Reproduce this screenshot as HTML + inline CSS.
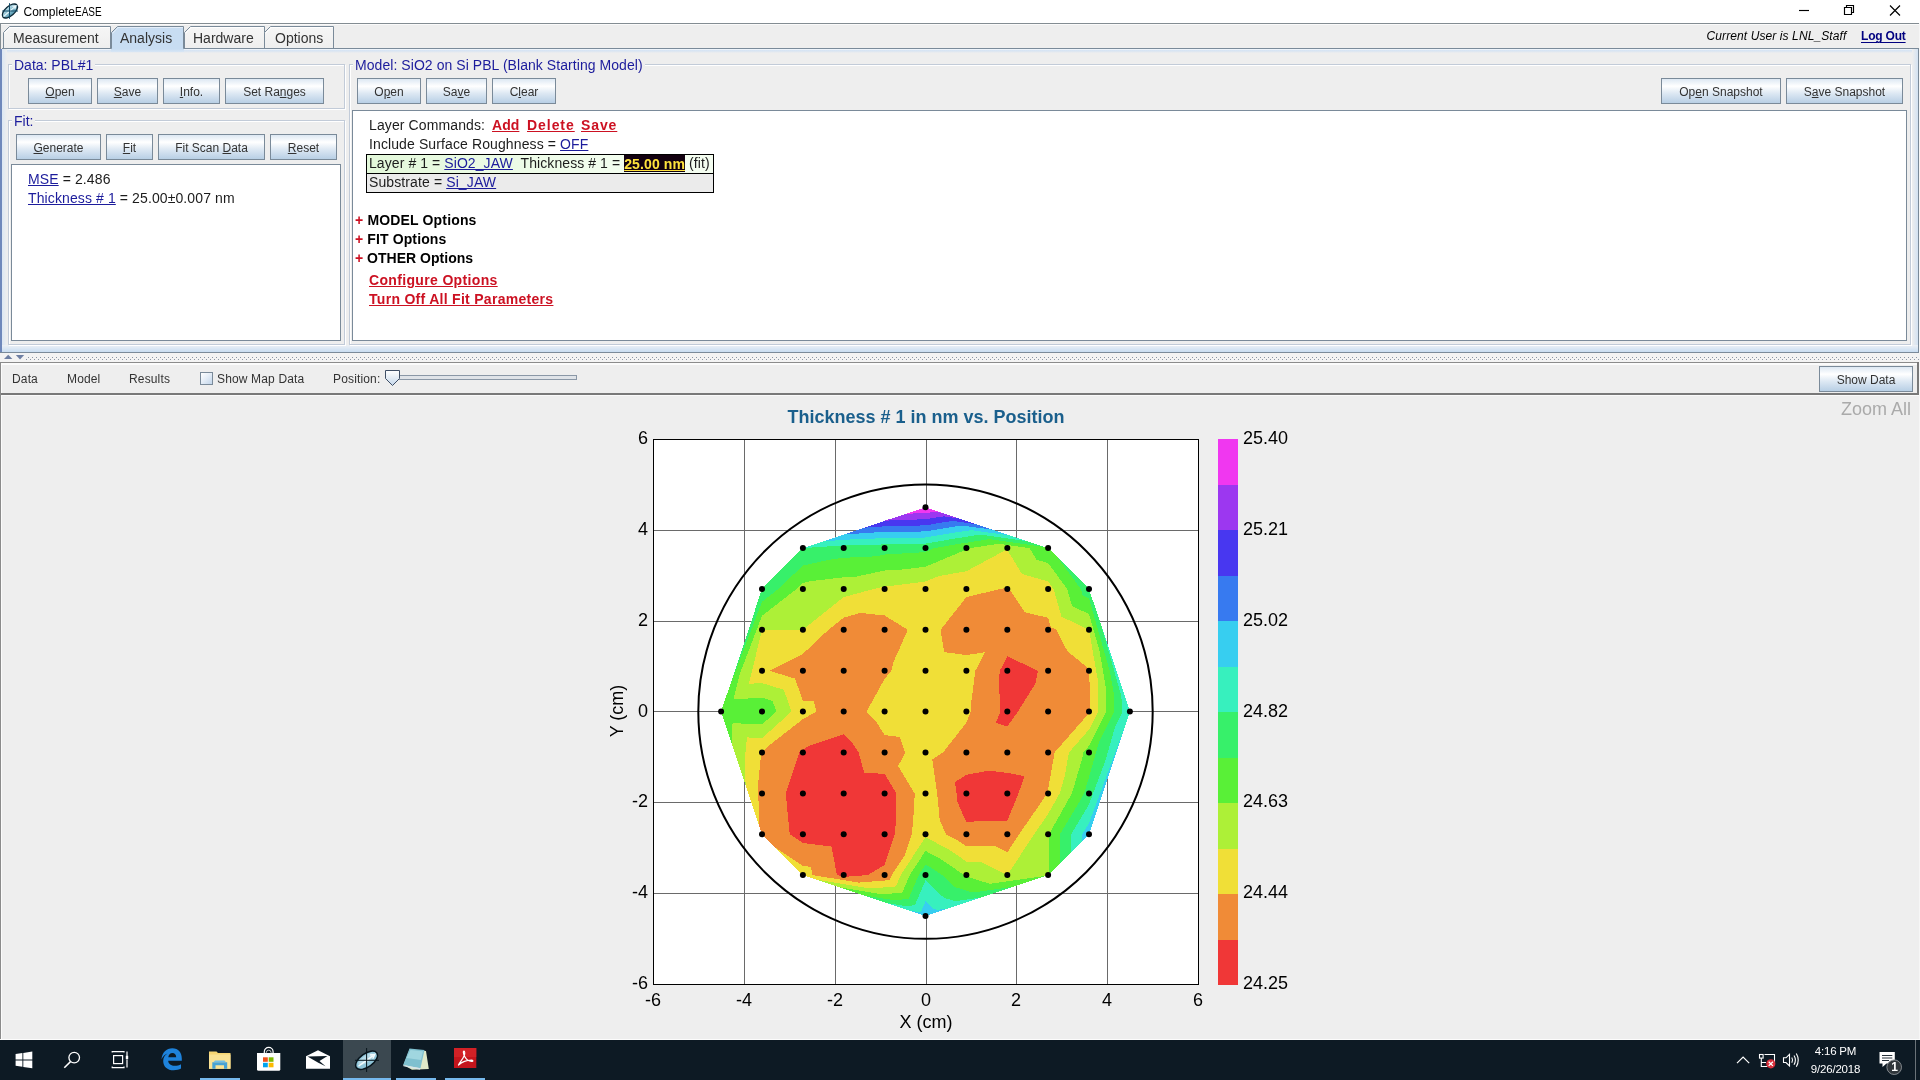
<!DOCTYPE html>
<html lang="en"><head><meta charset="utf-8"><title>CompleteEASE</title>
<style>
html,body{margin:0;padding:0}
body{width:1920px;height:1080px;overflow:hidden;position:relative;background:#eeeeee;font-family:"Liberation Sans",sans-serif;color:#333;font-size:12px}
div,span{box-sizing:border-box}
.a{position:absolute}
.btn{position:absolute;border:1px solid #7a8a99;background:linear-gradient(#dde8f3 0%,#ffffff 30%,#dde8f3 60%,#b8cfe5 100%);font-size:12px;color:#333;text-align:center;line-height:24px;padding-top:1px;white-space:nowrap}
u{text-decoration:underline;text-underline-offset:1px}
.grp{position:absolute;border:1px solid #c2cbd8;box-shadow:1px 1px 0 #fff, inset 1px 1px 0 #fff}
.gt{position:absolute;font-size:14px;color:#1c1c9c;background:#eeeeee;padding:0 2px;line-height:16px;white-space:nowrap}
.wp{position:absolute;background:#fff;border:1px solid #7a8a99}
.t14{position:absolute;font-size:14px;line-height:19px;color:#1c1c1c;white-space:nowrap;letter-spacing:0.11px}
.lnk{color:#1c1c9c;text-decoration:underline}
.red{color:#cc1122;font-weight:bold;text-decoration:underline}
.bk{font-weight:bold;color:#000}
.t12{position:absolute;font-size:12px;line-height:14px;color:#333;white-space:nowrap;letter-spacing:0.15px}

#root{position:absolute;left:0;top:0;width:1920px;height:1080px;will-change:transform}

</style></head>
<body>
<div id="root">
<!-- title bar -->
<div class="a" style="left:0;top:0;width:1920px;height:23px;background:#fff"></div>
<svg class="a" style="left:0;top:1px" width="21" height="21" viewBox="0 0 21 21">
 <defs><linearGradient id="ig" x1="0" y1="0" x2="0" y2="1"><stop offset="0" stop-color="#b9dce8"/><stop offset="0.55" stop-color="#86bccf"/><stop offset="1" stop-color="#4f93ab"/></linearGradient></defs>
 <g transform="rotate(-41 9.9 10.0)"><ellipse cx="9.9" cy="10.0" rx="9.2" ry="4.700" fill="url(#ig)" stroke="#0c2836" stroke-width="1.3"/>
 <path d="M1.500 10.0H17M14.800 8.200L18 10.0L14.800 11.800" stroke="#e9f7fb" stroke-width="1.1" fill="none"/></g>
 <path d="M2.200 10.0H18M9.500 2.200V17.800" stroke="#124a66" stroke-width="1" fill="none"/>
</svg>
<div class="a" style="left:23.5px;top:5px;font-size:12px;line-height:14px;color:#000;white-space:nowrap">Complete<span style="display:inline-block;transform:scaleX(0.83);transform-origin:0 50%">EASE</span></div>
<svg class="a" style="left:1790px;top:0" width="130" height="23" viewBox="0 0 130 23" fill="none" stroke="#000" stroke-width="1.15">
 <path d="M9 10.5H19"/>
 <path d="M54.5 7.5h7v7h-7z M56.5 7.5v-2h7v7h-2"/>
 <path d="M100 5.5l10 10M110 5.5l-10 10"/>
</svg>
<!-- window frame lines -->
<div class="a" style="left:0;top:23px;width:1919px;height:1px;background:#838c92"></div>
<div class="a" style="left:0;top:23px;width:1px;height:26px;background:#838c92"></div>
<div class="a" style="left:1px;top:24px;width:1918px;height:1px;background:#fafafa"></div>
<div class="a" style="left:1919px;top:23px;width:1px;height:1017px;background:#f6f6f6"></div>
<!-- tabs -->
<svg class="a" style="left:0;top:24px" width="400" height="30" viewBox="0 0 400 30">
 <defs><linearGradient id="tg" x1="0" y1="0" x2="0" y2="1"><stop offset="0" stop-color="#f6f6f6"/><stop offset="1" stop-color="#eeeeee"/></linearGradient></defs>
 <path d="M3.5 24.5V8.5L9.5 2.5H110.5V24.5" fill="url(#tg)" stroke="#7a8a99"/>
 <path d="M184.500 24.5V8.5L190.5 2.5H264.5V24.5" fill="url(#tg)" stroke="#7a8a99"/>
 <path d="M264.500 24.5V8.5L270.5 2.5H333.500V24.5" fill="url(#tg)" stroke="#7a8a99"/>
 <path d="M4.5 9.5L10 3.5H110M185.500 9.500L191 3.5H264M265.500 9.5L271 3.5H333" fill="none" stroke="#fff" stroke-opacity="0.9"/>
</svg>
<div class="a" style="left:2px;top:48px;width:1917px;height:1px;background:#7a8a99"></div>
<svg class="a" style="left:108px;top:24px" width="80" height="30" viewBox="0 0 80 30">
 <path d="M3.500 28V8.5L9.5 2.5H75.500V28Z" fill="#c8ddf2"/>
 <path d="M3.500 24.5V8.5L9.5 2.5H75.500V24.5" fill="none" stroke="#7a8a99"/>
 <path d="M4.500 9.5L10 3.500H75" fill="none" stroke="#e4eef9"/>
</svg>
<div class="a" style="left:13px;top:30px;font-size:14px;line-height:16px;color:#333;white-space:nowrap">Measurement</div>
<div class="a" style="left:120px;top:30px;font-size:14px;line-height:16px;color:#333;white-space:nowrap">Analysis</div>
<div class="a" style="left:193px;top:30px;font-size:14px;line-height:16px;color:#333;white-space:nowrap">Hardware</div>
<div class="a" style="left:275px;top:30px;font-size:14px;line-height:16px;color:#333;white-space:nowrap">Options</div>
<div class="a" style="left:1706.5px;top:29px;font-size:12px;line-height:14px;color:#000;font-style:italic;white-space:nowrap;letter-spacing:0.1px">Current User is LNL_Staff</div>
<div class="a" style="left:1861px;top:29px;font-size:12px;line-height:14px;color:#000080;font-weight:bold;text-decoration:underline;text-underline-offset:2px;text-decoration-thickness:1.3px;white-space:nowrap;letter-spacing:-0.2px">Log Out</div>
<!-- tab content panel -->
<div class="a" style="left:2px;top:49px;width:1916px;height:4px;background:linear-gradient(#f8fbfe,#d5e3f3 40%,#eeeeee)"></div>
<div class="a" style="left:111px;top:49px;width:73px;height:3px;background:linear-gradient(#c8ddf2,#d8e6f5)"></div>
<div class="a" style="left:0;top:49px;width:2px;height:304px;background:#6f88bb"></div>
<div class="a" style="left:2px;top:49px;width:5px;height:303px;background:linear-gradient(90deg,#dbe7f4,#eeeeee)"></div>
<div class="a" style="left:1912px;top:49px;width:6px;height:303px;background:linear-gradient(90deg,#eeeeee,#d3e2f2)"></div>
<div class="a" style="left:1918px;top:48px;width:1px;height:305px;background:#7a8a99"></div>
<div class="a" style="left:2px;top:345px;width:1916px;height:7px;background:linear-gradient(#eef1f5,#c8ddf2)"></div>
<div class="a" style="left:0;top:352px;width:1919px;height:1px;background:#7a8a99"></div>
<!-- group: Data -->
<div class="grp" style="left:8px;top:64px;width:337px;height:45px"></div>
<div class="gt" style="left:12px;top:57px">Data: PBL#1</div>
<div class="btn" style="left:28px;top:78px;width:64px;height:26px"><u>O</u>pen</div>
<div class="btn" style="left:97px;top:78px;width:61px;height:26px"><u>S</u>ave</div>
<div class="btn" style="left:163px;top:78px;width:57px;height:26px"><u>I</u>nfo.</div>
<div class="btn" style="left:225px;top:78px;width:99px;height:26px">Set Ra<u>n</u>ges</div>
<!-- group: Fit -->
<div class="grp" style="left:8px;top:120px;width:337px;height:225px"></div>
<div class="gt" style="left:12px;top:113px">Fit:</div>
<div class="btn" style="left:16px;top:134px;width:85px;height:26px"><u>G</u>enerate</div>
<div class="btn" style="left:106px;top:134px;width:47px;height:26px"><u>F</u>it</div>
<div class="btn" style="left:158px;top:134px;width:107px;height:26px">Fit Scan <u>D</u>ata</div>
<div class="btn" style="left:270px;top:134px;width:67px;height:26px"><u>R</u>eset</div>
<div class="wp" style="left:11px;top:164px;width:330px;height:177px"></div>
<div class="t14" style="left:28px;top:170px"><span class="lnk">MSE</span> = 2.486</div>
<div class="t14" style="left:28px;top:189px"><span class="lnk">Thickness # 1</span> = 25.00±0.007 nm</div>
<!-- group: Model -->
<div class="grp" style="left:349px;top:64px;width:1562px;height:281px"></div>
<div class="gt" style="left:353px;top:57px;letter-spacing:0.06px">Model: SiO2 on Si PBL (Blank Starting Model)</div>
<div class="btn" style="left:357px;top:78px;width:64px;height:26px">O<u>p</u>en</div>
<div class="btn" style="left:426px;top:78px;width:61px;height:26px">Sa<u>v</u>e</div>
<div class="btn" style="left:492px;top:78px;width:64px;height:26px">C<u>l</u>ear</div>
<div class="btn" style="left:1661px;top:78px;width:120px;height:26px">Op<u>e</u>n Snapshot</div>
<div class="btn" style="left:1786px;top:78px;width:117px;height:26px">S<u>a</u>ve Snapshot</div>
<div class="wp" style="left:352px;top:110px;width:1555px;height:231px"></div>
<div class="t14" style="left:369px;top:116px">Layer Commands:</div>
<div class="t14 red" style="left:492px;top:116px;letter-spacing:0.05px">Add</div>
<div class="t14 red" style="left:527px;top:116px;letter-spacing:0.95px">Delete</div>
<div class="t14 red" style="left:581px;top:116px;letter-spacing:0.9px">Save</div>
<div class="t14" style="left:369px;top:135px">Include Surface Roughness = <span class="lnk">OFF</span></div>
<div class="a" style="left:366px;top:154px;width:348px;height:39px;border:1px solid #000;background:#ebebeb"></div>
<div class="a" style="left:367px;top:155px;width:346px;height:18px;background:linear-gradient(90deg,#e3f8da,#f2fdee 70%,#f4fdf0)"></div>
<div class="a" style="left:367px;top:173px;width:346px;height:1px;background:#000"></div>
<div class="t14" style="left:369px;top:154px;letter-spacing:0.08px">Layer # 1 = <span class="lnk">SiO2_JAW</span>&nbsp; Thickness # 1 = <span style="background:#12000f;color:#ffe23c;font-weight:bold;text-decoration:underline;display:inline-block;height:17px;line-height:19px;margin-top:1px;vertical-align:top;padding:0;letter-spacing:0.12px">25.00 nm</span> (fit)</div>
<div class="t14" style="left:369px;top:173px">Substrate = <span class="lnk">Si_JAW</span></div>
<div class="t14 bk" style="left:355px;top:211px;letter-spacing:0.16px"><span style="color:#cc1122">+</span> MODEL Options</div>
<div class="t14 bk" style="left:355px;top:230px;letter-spacing:0.12px"><span style="color:#cc1122">+</span> FIT Options</div>
<div class="t14 bk" style="left:355px;top:249px;letter-spacing:0.02px"><span style="color:#cc1122">+</span> OTHER Options</div>
<div class="t14 red" style="left:369px;top:271px;letter-spacing:0.34px">Configure Options</div>
<div class="t14 red" style="left:369px;top:290px;letter-spacing:0.29px">Turn Off All Fit Parameters</div>
<!-- splitter -->
<div class="a" style="left:0;top:353px;width:1920px;height:9px;background:#f3f3f3"></div>
<svg class="a" style="left:0;top:353px" width="1920" height="9" viewBox="0 0 1920 9">
 <defs><pattern id="dots" x="0" y="0" width="4" height="4" patternUnits="userSpaceOnUse"><rect x="0" y="0" width="1" height="1" fill="#8c96a4"/><rect x="2" y="2" width="1" height="1" fill="#8c96a4"/></pattern></defs>
 <rect x="14" y="4" width="1906" height="3" fill="url(#dots)"/>
 <rect x="0" y="1" width="26" height="7" fill="#f3f3f3"/>
 <path d="M4 6L8.200 1.800L12.400 6Z" fill="#6e7fa3"/>
 <path d="M15.800 2H24.200L20 6.400Z" fill="#6e7fa3"/>
</svg>
<!-- lower toolbar -->
<div class="a" style="left:0;top:362px;width:1919px;height:1px;background:#8b8b8b"></div>
<div class="a" style="left:0;top:362px;width:1px;height:677px;background:#8b8b8b"></div>
<div class="a" style="left:1px;top:363px;width:1px;height:676px;background:#fbfbfb"></div>
<div class="a" style="left:1px;top:363px;width:1916px;height:2px;background:#fbfbfb"></div>
<div class="a" style="left:1917px;top:362px;width:2px;height:33px;background:#787878"></div>
<div class="a" style="left:1px;top:393px;width:1918px;height:2px;background:#787878"></div>
<div class="a" style="left:1px;top:395px;width:1918px;height:1px;background:#fafafa"></div>
<div class="t12" style="left:12px;top:372px">Data</div>
<div class="t12" style="left:67px;top:372px">Model</div>
<div class="t12" style="left:129px;top:372px">Results</div>
<div class="a" style="left:200px;top:372px;width:13px;height:13px;border:1px solid #7a8a99;background:linear-gradient(135deg,#ffffff 0%,#e6eef7 45%,#c2d5ea 100%)"></div>
<div class="t12" style="left:217px;top:372px">Show Map Data</div>
<div class="t12" style="left:333px;top:372px">Position:</div>
<svg class="a" style="left:384px;top:368px" width="196" height="19" viewBox="0 0 196 19">
 <defs><linearGradient id="sg" x1="0" y1="0" x2="0" y2="1"><stop offset="0" stop-color="#ffffff"/><stop offset="1" stop-color="#c5d7ea"/></linearGradient></defs>
 <rect x="9.5" y="7.500" width="183" height="4" fill="#dfe3e8" stroke="#8a97a6"/>
 <path d="M1.500 2.500H15.500V10.500L8.500 17.500L1.500 10.500Z" fill="url(#sg)" stroke="#3f4f66" stroke-linejoin="round"/>
</svg>
<div class="btn" style="left:1819px;top:366px;width:94px;height:26px">Show Data</div>
<div class="a" style="left:1841px;top:399px;font-size:18px;line-height:20px;color:#aaaaaa;white-space:nowrap">Zoom All</div>
<div class="a" style="left:0;top:1039px;width:1920px;height:1px;background:#fcfcfc"></div>

<svg class="a" style="left:0;top:396px" width="1912" height="643" viewBox="0 396 1912 643" font-family="'Liberation Sans',sans-serif">
 <text x="926" y="423" font-size="18" font-weight="bold" fill="#1a5f8c" text-anchor="middle">Thickness # 1 in nm vs. Position</text>
 <rect x="653" y="439" width="546" height="546" fill="#fff"/>
 <g stroke="#6a6a6a" stroke-width="1" shape-rendering="crispEdges">
  <path d="M744.500 439V985M835.500 439V985M926.500 439V985M1016.500 439V985M1107.500 439V985M653 530.500H1199M653 621.500H1199M653 711.500H1199M653 802.500H1199M653 893.500H1199"/>
 </g>
 <g shape-rendering="crispEdges">
<path fill="#f03737" d="M789.7,834.2L802.9,843.0L831.5,846.5L836.9,875.1L847.0,876.7L867.6,875.1L884.6,864.9L894.8,834.2L895.8,823.1L896.3,793.4L884.6,773.8L864.2,772.9L858.6,752.5L852.8,743.4L843.7,734.3L809.7,745.7L802.9,749.4L799.0,752.5L797.8,757.6L785.8,793.4L787.2,809.1L789.7,834.2ZM966.4,822.5L980.0,820.6L1007.3,820.6L1018.5,793.4L1024.5,776.1L1007.3,772.9L989.1,770.6L966.4,774.8L955.0,782.0L956.6,793.4L957.5,802.2L966.4,822.5ZM1007.3,726.5L1017.9,711.6L1035.7,683.1L1037.9,670.7L1007.3,656.3L999.9,670.7L998.8,679.2L1000.4,711.6L995.9,722.9L1007.3,726.5Z"/>
<path fill="#f08b37" d="M775.6,847.9L802.9,865.9L811.0,866.9L812.6,875.1L858.7,882.6L889.7,880.1L891.8,875.1L905.1,854.7L911.9,834.2L914.4,804.5L914.6,793.4L898.2,766.1L905.1,752.5L900.0,737.1L884.6,735.0L875.5,720.7L866.5,711.6L884.6,678.9L891.4,670.7L893.7,661.6L907.8,629.8L884.6,615.5L860.7,612.9L843.7,617.6L828.4,629.8L802.9,653.9L769.2,670.7L795.0,678.6L802.9,700.8L813.6,700.8L816.5,711.6L802.9,719.2L768.8,745.7L762.0,751.8L761.3,751.8L758.0,785.4L759.3,826.1L762.0,834.2L775.6,847.9ZM787.2,809.1L785.8,793.4L797.8,757.6L799.0,752.5L802.9,749.4L809.7,745.7L843.7,734.3L852.8,743.4L858.6,752.5L864.2,772.9L884.6,773.8L896.3,793.4L895.8,823.1L894.8,834.2L884.6,864.9L867.6,875.1L847.0,876.7L836.9,875.1L831.5,846.5L802.9,843.0L789.7,834.2L787.2,809.1ZM957.5,802.2L956.6,793.4L955.0,782.0L966.4,774.8L989.1,770.6L1007.3,772.9L1024.5,776.1L1018.5,793.4L1007.3,820.6L980.0,820.6L966.4,822.5L957.5,802.2ZM995.9,722.9L1000.4,711.6L998.8,679.2L999.9,670.7L1007.3,656.3L1037.9,670.7L1035.7,683.1L1017.9,711.6L1007.3,726.5L995.9,722.9ZM966.4,846.3L995.1,846.3L1007.3,852.4L1019.2,834.2L1045.7,795.8L1046.7,793.4L1048.1,789.3L1054.6,752.5L1089.0,713.2L1089.8,711.6L1089.4,671.1L1089.0,668.8L1067.5,651.4L1056.3,629.8L1050.8,627.2L1048.1,617.8L1024.8,612.3L1009.2,589.0L1007.7,588.5L1007.3,587.8L1000.4,589.0L966.4,597.1L940.6,629.8L944.1,652.1L966.4,655.1L984.8,652.3L975.4,670.7L970.6,707.4L970.8,711.6L966.4,722.7L943.0,752.5L932.3,759.3L937.2,793.4L939.7,820.0L945.9,834.2L959.2,841.4L966.4,846.3Z"/>
<path fill="#f0df37" d="M816.8,879.7L870.5,888.5L895.9,886.4L900.8,875.1L925.5,837.0L950.2,850.4L966.4,861.5L980.0,861.5L1007.3,875.1L1034.2,834.2L1048.1,814.0L1059.7,793.4L1064.6,776.8L1068.9,752.5L1089.0,729.6L1098.0,711.6L1097.7,679.4L1089.0,629.8L1061.4,616.6L1053.6,589.0L1048.1,581.5L1022.1,574.1L1007.3,550.0L1005.0,550.4L966.4,571.2L938.3,576.2L925.5,581.5L887.2,586.4L884.6,586.6L873.5,589.0L843.7,597.1L802.9,629.8L762.0,629.8L748.9,683.8L762.0,683.1L783.8,689.8L791.5,711.6L762.0,738.2L746.9,737.4L744.9,759.1L745.6,785.2L759.3,826.1L758.0,785.4L761.3,751.8L762.0,751.8L768.8,745.7L802.9,719.2L816.5,711.6L813.6,700.8L802.9,700.8L795.0,678.6L769.2,670.7L802.9,653.9L828.4,629.8L843.7,617.6L860.7,612.9L884.6,615.5L907.8,629.8L893.7,661.6L891.4,670.7L884.6,678.9L866.5,711.6L875.5,720.7L884.6,735.0L900.0,737.1L905.1,752.5L898.2,766.1L914.6,793.4L914.4,804.5L911.9,834.2L905.1,854.7L891.8,875.1L889.7,880.1L858.7,882.6L812.6,875.1L811.0,866.9L802.9,865.9L775.6,847.9L802.9,875.1L816.8,879.7ZM959.2,841.4L945.9,834.2L939.7,820.0L937.2,793.4L932.3,759.3L943.0,752.5L966.4,722.7L970.8,711.6L970.6,707.4L975.4,670.7L984.8,652.3L966.4,655.1L944.1,652.1L940.6,629.8L966.4,597.1L1000.4,589.0L1007.3,587.8L1007.7,588.5L1009.2,589.0L1024.8,612.3L1048.1,617.8L1050.8,627.2L1056.3,629.8L1067.5,651.4L1089.0,668.8L1089.4,671.1L1089.8,711.6L1089.0,713.2L1054.6,752.5L1048.1,789.3L1046.7,793.4L1045.7,795.8L1019.2,834.2L1007.3,852.4L995.1,846.3L966.4,846.3L959.2,841.4Z"/>
<path fill="#adf037" d="M839.9,887.4L882.2,894.3L902.2,892.7L909.8,875.1L925.5,850.9L941.2,859.4L964.2,875.1L965.3,876.2L989.9,883.8L1045.8,875.9L1048.1,875.1L1048.9,874.3L1048.9,834.2L1050.1,832.3L1071.9,793.4L1082.0,759.4L1083.3,752.5L1089.0,745.9L1106.2,711.6L1105.9,687.7L1099.5,650.8L1089.0,614.1L1072.0,606.0L1067.2,589.0L1048.1,563.0L1036.6,559.7L1029.4,548.1L998.6,543.8L970.3,548.1L966.4,550.2L963.8,550.7L925.5,566.7L904.2,569.4L884.6,570.5L856.0,576.7L843.7,577.3L810.6,581.2L802.9,582.9L796.5,589.0L762.0,615.8L739.3,675.3L733.5,699.3L762.0,697.7L772.6,701.0L776.4,711.6L762.0,724.5L732.6,723.1L731.7,732.7L732.0,744.3L745.6,785.2L744.9,759.1L746.9,737.4L762.0,738.2L791.5,711.6L783.8,689.8L762.0,683.1L748.9,683.8L762.0,629.8L802.9,629.8L843.7,597.1L873.5,589.0L884.6,586.6L887.2,586.4L925.5,581.5L938.3,576.2L966.4,571.2L1005.0,550.4L1007.3,550.0L1022.1,574.1L1048.1,581.5L1053.6,589.0L1061.4,616.6L1089.0,629.8L1097.7,679.4L1098.0,711.6L1089.0,729.6L1068.9,752.5L1064.6,776.8L1059.7,793.4L1048.1,814.0L1034.2,834.2L1007.3,875.1L980.0,861.5L966.4,861.5L950.2,850.4L925.5,837.0L900.8,875.1L895.9,886.4L870.5,888.5L816.8,879.7L839.9,887.4Z"/>
<path fill="#59f037" d="M863.0,895.2L893.9,900.2L908.5,899.0L918.8,875.1L925.5,864.7L932.2,868.4L942.1,875.1L954.5,886.9L972.5,892.5L1013.3,886.7L1045.8,875.9L989.9,883.8L965.3,876.2L964.2,875.1L941.2,859.4L925.5,850.9L909.8,875.1L902.2,892.7L882.2,894.3L839.9,887.4L863.0,895.2ZM1060.0,863.2L1060.0,834.2L1077.9,804.5L1084.1,793.4L1089.0,777.0L1098.8,742.7L1114.3,711.6L1114.2,695.9L1110.0,671.8L1089.0,598.4L1082.6,595.3L1080.8,589.0L1058.3,558.3L1048.1,548.1L1044.7,547.0L989.4,539.2L961.7,543.4L934.4,548.1L925.5,551.8L921.2,552.4L884.6,554.5L876.4,556.3L843.7,557.8L832.7,559.1L802.9,565.5L778.3,589.0L762.0,601.7L728.6,689.3L721.1,711.6L732.0,744.3L731.7,732.7L732.6,723.1L762.0,724.5L776.4,711.6L772.6,701.0L762.0,697.7L733.5,699.3L739.3,675.3L762.0,615.8L796.5,589.0L802.9,582.9L810.6,581.2L843.7,577.3L856.0,576.7L884.6,570.5L904.2,569.4L925.5,566.7L963.8,550.7L966.4,550.2L970.3,548.1L998.6,543.8L1029.4,548.1L1036.6,559.7L1048.1,563.0L1067.2,589.0L1072.0,606.0L1089.0,614.1L1099.5,650.8L1105.9,687.7L1106.2,711.6L1089.0,745.9L1083.3,752.5L1082.0,759.4L1071.9,793.4L1050.1,832.3L1048.9,834.2L1048.9,874.3L1060.0,863.2Z"/>
<path fill="#37f06a" d="M886.2,902.9L905.6,906.0L914.8,905.3L925.5,880.3L943.8,897.7L955.1,901.2L980.8,897.5L1013.3,886.7L972.5,892.5L954.5,886.9L942.1,875.1L932.2,868.4L925.5,864.7L918.8,875.1L908.5,899.0L893.9,900.2L863.0,895.2L886.2,902.9ZM1071.2,852.0L1071.2,834.2L1089.0,804.5L1105.4,760.7L1115.2,726.3L1122.5,711.6L1122.4,704.2L1120.4,692.7L1101.6,626.7L1089.0,589.0L1058.3,558.3L1080.8,589.0L1082.6,595.3L1089.0,598.4L1110.0,671.8L1114.2,695.9L1114.3,711.6L1098.8,742.7L1089.0,777.0L1084.1,793.4L1077.9,804.5L1060.0,834.2L1060.0,863.2L1071.2,852.0ZM1027.7,541.3L980.3,534.6L956.5,538.3L925.5,543.6L888.3,544.4L850.0,545.0L802.9,548.1L762.0,589.0L728.6,689.3L762.0,601.7L778.3,589.0L802.9,565.5L832.7,559.1L843.7,557.8L876.4,556.3L884.6,554.5L921.2,552.4L925.5,551.8L934.4,548.1L961.7,543.4L989.4,539.2L1044.7,547.0L1027.7,541.3Z"/>
<path fill="#37f0be" d="M909.3,910.6L917.3,911.9L921.1,911.6L925.5,901.3L933.0,908.4L937.7,909.9L948.3,908.4L980.8,897.5L955.1,901.2L943.8,897.7L925.5,880.3L914.8,905.3L905.6,906.0L886.2,902.9L909.3,910.6ZM1082.3,840.9L1082.3,834.2L1089.0,823.1L1124.0,729.1L1129.9,711.6L1101.6,626.7L1120.4,692.7L1122.4,704.2L1122.5,711.6L1115.2,726.3L1105.4,760.7L1089.0,804.5L1071.2,834.2L1071.2,852.0L1082.3,840.9ZM1010.7,535.6L971.2,530.1L951.4,533.1L925.5,537.5L894.5,538.2L862.6,538.7L823.3,541.3L802.9,548.1L850.0,545.0L888.3,544.4L925.5,543.6L956.5,538.3L980.3,534.6L1027.7,541.3L1010.7,535.6Z"/>
<path fill="#37cef0" d="M948.3,908.4L937.7,909.9L933.0,908.4L925.5,901.3L921.1,911.6L917.3,911.9L909.3,910.6L925.5,916.0L948.3,908.4ZM1124.0,729.1L1089.0,823.1L1082.3,834.2L1082.3,840.9L1089.0,834.2L1124.0,729.1ZM993.6,529.9L962.0,525.5L946.2,527.9L925.5,531.4L900.7,532.0L875.2,532.4L843.7,534.5L823.3,541.3L862.6,538.7L894.5,538.2L925.5,537.5L951.4,533.1L971.2,530.1L1010.7,535.6L993.6,529.9Z"/>
<path fill="#377af0" d="M976.6,524.3L952.9,520.9L941.0,522.7L925.5,525.4L906.9,525.8L887.8,526.1L864.2,527.7L843.7,534.5L875.2,532.4L900.7,532.0L925.5,531.4L946.2,527.9L962.0,525.5L993.6,529.9L976.6,524.3Z"/>
<path fill="#4837f0" d="M959.6,518.6L943.8,516.4L935.8,517.6L925.5,519.3L913.1,519.6L900.3,519.8L884.6,520.8L864.2,527.7L887.8,526.1L906.9,525.8L925.5,525.4L941.0,522.7L952.9,520.9L976.6,524.3L959.6,518.6Z"/>
<path fill="#9c37f0" d="M942.5,512.9L934.6,511.8L930.7,512.4L925.5,513.3L919.3,513.4L912.9,513.5L905.1,514.0L884.6,520.8L900.3,519.8L913.1,519.6L925.5,519.3L935.8,517.6L943.8,516.4L959.6,518.6L942.5,512.9Z"/>
<path fill="#f037f0" d="M905.1,514.0L912.9,513.5L919.3,513.4L925.5,513.3L930.7,512.4L934.6,511.8L942.5,512.9L925.5,507.2L905.1,514.0Z"/>
 </g>
 <circle cx="925.5" cy="711.6" r="227.2" fill="none" stroke="#000" stroke-width="2"/>
 <g fill="#000">
<circle cx="721.1" cy="711.6" r="3.0"/>
<circle cx="762.0" cy="834.2" r="3.0"/>
<circle cx="762.0" cy="793.4" r="3.0"/>
<circle cx="762.0" cy="752.5" r="3.0"/>
<circle cx="762.0" cy="711.6" r="3.0"/>
<circle cx="762.0" cy="670.7" r="3.0"/>
<circle cx="762.0" cy="629.8" r="3.0"/>
<circle cx="762.0" cy="589.0" r="3.0"/>
<circle cx="802.9" cy="875.1" r="3.0"/>
<circle cx="802.9" cy="834.2" r="3.0"/>
<circle cx="802.9" cy="793.4" r="3.0"/>
<circle cx="802.9" cy="752.5" r="3.0"/>
<circle cx="802.9" cy="711.6" r="3.0"/>
<circle cx="802.9" cy="670.7" r="3.0"/>
<circle cx="802.9" cy="629.8" r="3.0"/>
<circle cx="802.9" cy="589.0" r="3.0"/>
<circle cx="802.9" cy="548.1" r="3.0"/>
<circle cx="843.7" cy="875.1" r="3.0"/>
<circle cx="843.7" cy="834.2" r="3.0"/>
<circle cx="843.7" cy="793.4" r="3.0"/>
<circle cx="843.7" cy="752.5" r="3.0"/>
<circle cx="843.7" cy="711.6" r="3.0"/>
<circle cx="843.7" cy="670.7" r="3.0"/>
<circle cx="843.7" cy="629.8" r="3.0"/>
<circle cx="843.7" cy="589.0" r="3.0"/>
<circle cx="843.7" cy="548.1" r="3.0"/>
<circle cx="884.6" cy="875.1" r="3.0"/>
<circle cx="884.6" cy="834.2" r="3.0"/>
<circle cx="884.6" cy="793.4" r="3.0"/>
<circle cx="884.6" cy="752.5" r="3.0"/>
<circle cx="884.6" cy="711.6" r="3.0"/>
<circle cx="884.6" cy="670.7" r="3.0"/>
<circle cx="884.6" cy="629.8" r="3.0"/>
<circle cx="884.6" cy="589.0" r="3.0"/>
<circle cx="884.6" cy="548.1" r="3.0"/>
<circle cx="925.5" cy="916.0" r="3.0"/>
<circle cx="925.5" cy="875.1" r="3.0"/>
<circle cx="925.5" cy="834.2" r="3.0"/>
<circle cx="925.5" cy="793.4" r="3.0"/>
<circle cx="925.5" cy="752.5" r="3.0"/>
<circle cx="925.5" cy="711.6" r="3.0"/>
<circle cx="925.5" cy="670.7" r="3.0"/>
<circle cx="925.5" cy="629.8" r="3.0"/>
<circle cx="925.5" cy="589.0" r="3.0"/>
<circle cx="925.5" cy="548.1" r="3.0"/>
<circle cx="925.5" cy="507.2" r="3.0"/>
<circle cx="966.4" cy="875.1" r="3.0"/>
<circle cx="966.4" cy="834.2" r="3.0"/>
<circle cx="966.4" cy="793.4" r="3.0"/>
<circle cx="966.4" cy="752.5" r="3.0"/>
<circle cx="966.4" cy="711.6" r="3.0"/>
<circle cx="966.4" cy="670.7" r="3.0"/>
<circle cx="966.4" cy="629.8" r="3.0"/>
<circle cx="966.4" cy="589.0" r="3.0"/>
<circle cx="966.4" cy="548.1" r="3.0"/>
<circle cx="1007.3" cy="875.1" r="3.0"/>
<circle cx="1007.3" cy="834.2" r="3.0"/>
<circle cx="1007.3" cy="793.4" r="3.0"/>
<circle cx="1007.3" cy="752.5" r="3.0"/>
<circle cx="1007.3" cy="711.6" r="3.0"/>
<circle cx="1007.3" cy="670.7" r="3.0"/>
<circle cx="1007.3" cy="629.8" r="3.0"/>
<circle cx="1007.3" cy="589.0" r="3.0"/>
<circle cx="1007.3" cy="548.1" r="3.0"/>
<circle cx="1048.1" cy="875.1" r="3.0"/>
<circle cx="1048.1" cy="834.2" r="3.0"/>
<circle cx="1048.1" cy="793.4" r="3.0"/>
<circle cx="1048.1" cy="752.5" r="3.0"/>
<circle cx="1048.1" cy="711.6" r="3.0"/>
<circle cx="1048.1" cy="670.7" r="3.0"/>
<circle cx="1048.1" cy="629.8" r="3.0"/>
<circle cx="1048.1" cy="589.0" r="3.0"/>
<circle cx="1048.1" cy="548.1" r="3.0"/>
<circle cx="1089.0" cy="834.2" r="3.0"/>
<circle cx="1089.0" cy="793.4" r="3.0"/>
<circle cx="1089.0" cy="752.5" r="3.0"/>
<circle cx="1089.0" cy="711.6" r="3.0"/>
<circle cx="1089.0" cy="670.7" r="3.0"/>
<circle cx="1089.0" cy="629.8" r="3.0"/>
<circle cx="1089.0" cy="589.0" r="3.0"/>
<circle cx="1129.9" cy="711.6" r="3.0"/>
 </g>
 <rect x="653.500" y="439.500" width="545" height="545" fill="none" stroke="#000" stroke-width="1" shape-rendering="crispEdges"/>
 <g font-size="18" fill="#000" text-anchor="end">
  <text x="648" y="444">6</text><text x="648" y="535">4</text><text x="648" y="626">2</text><text x="648" y="717">0</text><text x="648" y="807">-2</text><text x="648" y="898">-4</text><text x="648" y="989">-6</text>
 </g>
 <g font-size="18" fill="#000" text-anchor="middle">
  <text x="653" y="1006">-6</text><text x="744" y="1006">-4</text><text x="835" y="1006">-2</text><text x="926" y="1006">0</text><text x="1016" y="1006">2</text><text x="1107" y="1006">4</text><text x="1198" y="1006">6</text>
  <text x="926" y="1028">X (cm)</text>
  <text transform="translate(623 711) rotate(-90)" x="0" y="0">Y (cm)</text>
 </g>
 <g shape-rendering="crispEdges">
<rect x="1218" y="939.04" width="20" height="45.46" fill="#f03737"/><rect x="1218" y="893.58" width="20" height="45.96" fill="#f08b37"/><rect x="1218" y="848.12" width="20" height="45.96" fill="#f0df37"/><rect x="1218" y="802.67" width="20" height="45.96" fill="#adf037"/><rect x="1218" y="757.21" width="20" height="45.96" fill="#59f037"/><rect x="1218" y="711.75" width="20" height="45.96" fill="#37f06a"/><rect x="1218" y="666.29" width="20" height="45.96" fill="#37f0be"/><rect x="1218" y="620.83" width="20" height="45.96" fill="#37cef0"/><rect x="1218" y="575.38" width="20" height="45.96" fill="#377af0"/><rect x="1218" y="529.92" width="20" height="45.96" fill="#4837f0"/><rect x="1218" y="484.46" width="20" height="45.96" fill="#9c37f0"/><rect x="1218" y="439.00" width="20" height="45.96" fill="#f037f0"/>
 </g>
 <g font-size="18" fill="#000">
  <text x="1243" y="444">25.40</text><text x="1243" y="535">25.21</text><text x="1243" y="626">25.02</text><text x="1243" y="717">24.82</text><text x="1243" y="807">24.63</text><text x="1243" y="898">24.44</text><text x="1243" y="989">24.25</text>
 </g>
</svg>

<div class="a" style="left:0;top:1040px;width:1920px;height:40px;background:#0d1a24"></div>
<div class="a" style="left:343px;top:1040px;width:48px;height:40px;background:#3b4850"></div>
<div class="a" style="left:200px;top:1078px;width:40px;height:2px;background:#76b9ed"></div>
<div class="a" style="left:343px;top:1078px;width:48px;height:2px;background:#76b9ed"></div>
<div class="a" style="left:396px;top:1078px;width:40px;height:2px;background:#76b9ed"></div>
<div class="a" style="left:445px;top:1078px;width:40px;height:2px;background:#76b9ed"></div>
<svg class="a" style="left:0;top:1040px" width="500" height="40" viewBox="0 0 500 40">
 <!-- windows logo -->
 <g fill="#fff">
  <path d="M15.600 14.100L22.400 13.100V19.500H15.600Z"/><path d="M23.300 13L32.300 11.600V19.500H23.300Z"/>
  <path d="M15.600 20.400H22.400V26.800L15.600 25.800Z"/><path d="M23.300 20.400H32.300V28.300L23.300 26.900Z"/>
 </g>
 <!-- search -->
 <circle cx="74.200" cy="17.600" r="5.300" fill="none" stroke="#fff" stroke-width="1.300"/>
 <path d="M70.500 21.600L64.300 27.800" stroke="#fff" stroke-width="1.500" fill="none"/>
 <!-- task view -->
 <g fill="none" stroke="#fff" stroke-width="1.200">
  <rect x="113.600" y="15.600" width="9" height="8"/>
  <path d="M112.200 12.600V11.600H124V12.600M112.200 26.600V27.600H124V26.600"/>
  <path d="M127 11.600V16M127 19.500V27.600"/>
 </g>
 <rect x="125.800" y="15.800" width="2.400" height="3.400" fill="#fff"/>
 <!-- edge -->
 <path d="M161.500 19.500C162 12.500 166.500 8.300 172.300 8.300C178.500 8.300 181.800 12.800 181.800 18.500V20.800H168.200C168.400 24.300 171.300 25.800 174.600 25.800C177 25.800 179.300 25.200 181 24.200V28.600C179.200 29.600 176.600 30.300 173.600 30.300C167.300 30.300 163.200 26.600 163.200 21C163.200 17.800 164.900 15.100 167.600 13.600C165.200 14.300 162.800 16.400 161.500 19.500ZM168.300 17.200H176.200C176.200 14.700 174.800 12.900 172.400 12.900C170.100 12.900 168.600 14.700 168.300 17.200Z" fill="#1e83dc"/>
 <!-- explorer -->
 <path d="M209 11.500H216.500L218 13H230.500V28.800H209Z" fill="#f7d673"/>
 <path d="M209 14.500H230.500V28.800H209Z" fill="#fbe394"/>
 <path d="M212.300 28.800V22.300H227.200V28.800H224V25.300H215.500V28.800Z" fill="#48a3d4"/>
 <path d="M213.500 22.300L215 20.600H224.500L226 22.300Z" fill="#73c0e6"/>
 <!-- store -->
 <path d="M257 13H280.300V29.300Q280.300 30.800 278.800 30.800H258.500Q257 30.800 257 29.300Z" fill="#fff"/>
 <path d="M264.300 13.500V11.800A4.400 4.400 0 0 1 273.100 11.800V13.500" fill="none" stroke="#fff" stroke-width="1.200"/>
 <path d="M266.300 13.500V12.600A2.400 2.400 0 0 1 271.100 12.600V13.500" fill="none" stroke="#e8e8e8" stroke-width="0.800"/>
 <rect x="263" y="17.300" width="4.800" height="4.500" fill="#f1511b"/><rect x="268.700" y="17.300" width="4.800" height="4.500" fill="#80bb00"/>
 <rect x="263" y="22.800" width="4.800" height="4.500" fill="#00a3ee"/><rect x="268.700" y="22.800" width="4.800" height="4.500" fill="#fbb900"/>
 <!-- mail -->
 <path d="M306 16.300L318 10.200L330 16.300V28.700H306Z" fill="#fff"/>
 <path d="M307.500 16.600L327.500 15.900L319.500 21L325.500 26.300L318.300 22.800Z" fill="#0d1a24"/>
 <!-- CompleteEASE -->
 <g transform="rotate(-36 366.600 20.300)">
  <ellipse cx="366.600" cy="20.300" rx="12.600" ry="6.700" fill="#8fc4d8" stroke="#08141c" stroke-width="1.500"/>
  <ellipse cx="366.600" cy="19" rx="9" ry="3.500" fill="#c4e3ee" opacity="0.700"/>
  <path d="M356.500 20.300H375M372.500 18L376.800 20.300L372.500 22.600" stroke="#f4fbfd" stroke-width="1.400" fill="none"/>
 </g>
 <path d="M355 20.300H379M366.600 8V32" stroke="#08141c" stroke-width="1" fill="none"/>
 <!-- notepad -->
 <path d="M409.500 9.500L426 11L428.800 29L412 29.800L403.500 25Z" fill="#dfe9c9"/>
 <path d="M409.500 8.500L424.500 10L420.500 28.300L403.200 25Z" fill="#7fc0cf"/>
 <path d="M410.500 10L423 11.300L421 20L406.500 18Z" fill="#a9dbe4" opacity="0.800"/>
 <path d="M403.200 25L420.500 28.300L420 29.700L403.500 26.200Z" fill="#d7e4ea"/>
 <!-- acrobat -->
 <rect x="454" y="8" width="22.300" height="20" fill="#c4151c"/>
 <rect x="454" y="8" width="22.300" height="9" fill="#d9262b" opacity="0.700"/>
 <path d="M458.500 25C459.500 22.500 463 19 464.300 15.500C465 13.300 464.800 11 464 11C463 11 463.200 13.800 464.800 16.800C466.300 19.500 469.500 21.500 472.300 21.300C473.300 21.200 473 20.200 471.500 20.200C468 20.300 462 22 458.500 25Z" fill="none" stroke="#fff" stroke-width="1.200" stroke-linejoin="round"/>
</svg>
<svg class="a" style="left:1720px;top:1040px" width="200" height="40" viewBox="0 0 200 40">
 <!-- chevron -->
 <path d="M17 23.200L23.100 17.100L29.200 23.200" fill="none" stroke="#fff" stroke-width="1.200"/>
 <!-- network -->
 <g fill="none" stroke="#fff" stroke-width="1.100">
  <path d="M44.500 14.500H54.500V22.500"/>
  <rect x="39.500" y="14.500" width="3.600" height="3.600"/>
  <path d="M41.300 18.100V26.500H47.500M41.300 22.500H46"/>
 </g>
 <circle cx="50.800" cy="23.800" r="4.600" fill="#d9303c"/>
 <path d="M48.700 21.700L52.900 25.900M52.900 21.700L48.700 25.900" stroke="#fff" stroke-width="1.300" fill="none"/>
 <!-- speaker -->
 <g fill="none" stroke="#fff" stroke-width="1.100">
  <path d="M63.500 17.800H66L69.500 14.300V26L66 22.500H63.500Z"/>
  <path d="M71.800 17.500Q73.400 20.100 71.800 22.800M74 15.500Q76.800 20.100 74 24.800M76.300 13.500Q80.200 20.100 76.300 26.800"/>
 </g>
 <!-- notification -->
 <path d="M159.500 12H174.800V23.500H166.500L162.500 27V23.500H159.500Z" fill="#fff"/>
 <path d="M162 15.500H172.300M162 18H172.300M162 20.500H169" stroke="#0d1a24" stroke-width="0.900"/>
 <circle cx="174.200" cy="27.200" r="7.300" fill="#30363b" stroke="#8d9397" stroke-width="0.900"/>
 <path d="M195.500 0V40" stroke="#6a7278" stroke-width="1"/>
</svg>
<div class="a" style="left:1794px;top:1044px;width:83px;text-align:center;font-size:11.500px;line-height:14px;color:#fff;white-space:nowrap;letter-spacing:-0.2px">4:16 PM</div>
<div class="a" style="left:1794px;top:1062px;width:83px;text-align:center;font-size:11.500px;line-height:14px;color:#fff;white-space:nowrap;letter-spacing:-0.2px">9/26/2018</div>
<div class="a" style="left:1889px;top:1059px;width:11px;text-align:center;font-size:12px;line-height:16px;color:#fff;font-weight:bold">1</div>

</div>
</body></html>
